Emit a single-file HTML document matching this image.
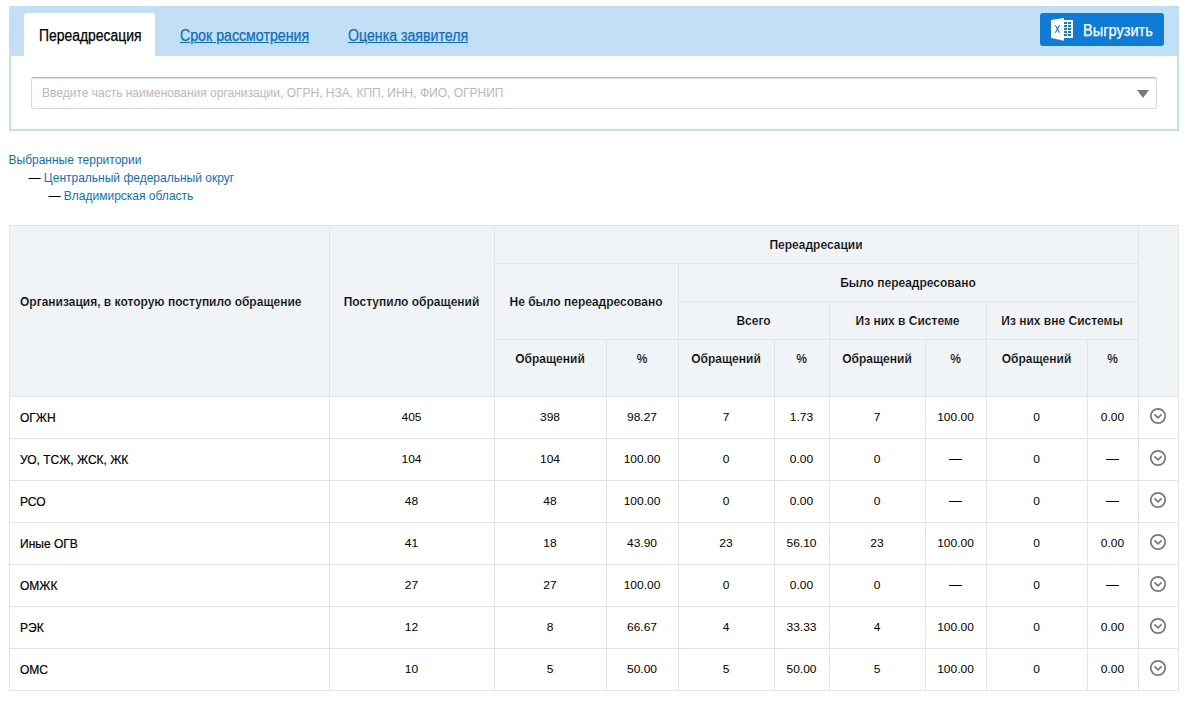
<!DOCTYPE html>
<html><head><meta charset="utf-8">
<style>
html,body{margin:0;padding:0;background:#fff;}
body{width:1188px;height:702px;overflow:hidden;position:relative;font-family:"Liberation Sans",sans-serif;}
div{box-sizing:border-box;}
.abs{position:absolute;}
.ln{position:absolute;background:#e0e5e9;}
.t{position:absolute;margin-top:-4px;text-align:center;font-size:12px;line-height:0;color:#000;white-space:nowrap;}
.t b{font-weight:bold;}
.num{font-size:11px;transform:scaleX(1.09);}
.h{position:absolute;margin-top:-4px;-webkit-text-stroke:0.2px #f0f4f7;text-align:center;font-size:12px;line-height:0;color:#000;font-weight:bold;white-space:nowrap;}
.tab{position:absolute;margin-top:-4px;-webkit-text-stroke:0.25px currentColor;font-size:16px;line-height:0;white-space:nowrap;transform-origin:0 0;}
.terr{position:absolute;margin-top:-4px;font-size:12px;line-height:0;white-space:nowrap;color:#0b6fc6;}
.dash{color:#000;}
</style></head><body>

<div class="abs" style="left:9px;top:6px;width:1170px;height:125px;border:2px solid #c2dff5;border-top:0;"></div>
<div class="abs" style="left:9px;top:6px;width:1170px;height:50px;background:#c2dff5;"></div>
<div class="abs" style="left:24px;top:13px;width:131px;height:43px;background:#fff;border-radius:3px 3px 0 0;"></div>
<div class="tab" style="left:39px;top:40px;color:#000;transform:scaleX(0.87)">Переадресация</div>
<div class="tab" style="left:180px;top:40px;color:#0c6dc4;text-decoration:underline;transform:scaleX(0.886)">Срок рассмотрения</div>
<div class="tab" style="left:347.5px;top:40px;color:#0c6dc4;text-decoration:underline;transform:scaleX(0.885)">Оценка заявителя</div>
<div class="abs" style="left:1040px;top:13px;width:124px;height:33px;background:#0e7bd6;border-radius:3px;"></div>
<svg class="abs" style="left:1050px;top:17px" width="25" height="25" viewBox="0 0 25 25">
<path d="M1 3 L14 1 L14 23.7 L1 21 Z" fill="#fff"/>
<rect x="14" y="3" width="9" height="18" fill="#fff"/>
<g fill="#0e7bd6">
<rect x="14" y="5" width="3" height="2"/><rect x="18" y="5" width="3" height="2"/>
<rect x="14" y="8" width="3" height="2"/><rect x="18" y="8" width="3" height="2"/>
<rect x="14" y="11" width="3" height="2"/><rect x="18" y="11" width="3" height="2"/>
<rect x="14" y="14" width="3" height="2"/><rect x="18" y="14" width="3" height="2"/>
<rect x="14" y="17" width="3" height="2"/><rect x="18" y="17" width="3" height="2"/>
</g>
<path d="M5.3 8.2 L9.6 15.8 M9.6 8.2 L5.3 15.8" stroke="#0e7bd6" stroke-width="1.1" fill="none"/>
</svg>
<div class="tab" style="left:1083px;top:35px;color:#fff;font-size:16px;transform:scaleX(0.91)">Выгрузить</div>
<div class="abs" style="left:31px;top:77px;width:1126px;height:32px;border:1px solid #d9d9d9;border-top-color:#b5b5b5;border-radius:3px;box-shadow:inset 0 1px 1px rgba(0,0,0,0.12);"></div>
<div class="abs" style="left:42px;top:93px;font-size:12px;line-height:0;color:#b9b9b9;white-space:nowrap">Введите часть наименования организации, ОГРН, НЗА, КПП, ИНН, ФИО, ОГРНИП</div>
<svg class="abs" style="left:1137px;top:90px" width="12" height="8" viewBox="0 0 12 8"><path d="M0 0 H12 L6 8 Z" fill="#777"/></svg>
<div class="terr" style="left:8.5px;top:164px">Выбранные территории</div>
<div class="terr" style="left:28.5px;top:182px"><span class="dash">—</span> Центральный федеральный округ</div>
<div class="terr" style="left:48.5px;top:200px"><span class="dash">—</span> Владимирская область</div>
<div class="abs" style="left:9px;top:225px;width:1170px;height:171px;background:#f0f4f7;"></div>
<div class="ln" style="left:9px;top:225px;width:1170px;height:1px"></div>
<div class="ln" style="left:9px;top:396px;width:1170px;height:1px"></div>
<div class="ln" style="left:9px;top:225px;width:1px;height:466px"></div>
<div class="ln" style="left:1178px;top:225px;width:1px;height:466px"></div>
<div class="ln" style="left:329px;top:225px;width:1px;height:466px"></div>
<div class="ln" style="left:494px;top:225px;width:1px;height:466px"></div>
<div class="ln" style="left:1138px;top:225px;width:1px;height:466px"></div>
<div class="ln" style="left:494px;top:263px;width:645px;height:1px"></div>
<div class="ln" style="left:678px;top:301px;width:461px;height:1px"></div>
<div class="ln" style="left:494px;top:339px;width:645px;height:1px"></div>
<div class="ln" style="left:678px;top:263px;width:1px;height:428px"></div>
<div class="ln" style="left:829px;top:301px;width:1px;height:390px"></div>
<div class="ln" style="left:986px;top:301px;width:1px;height:390px"></div>
<div class="ln" style="left:606px;top:339px;width:1px;height:352px"></div>
<div class="ln" style="left:774px;top:339px;width:1px;height:352px"></div>
<div class="ln" style="left:925px;top:339px;width:1px;height:352px"></div>
<div class="ln" style="left:1087px;top:339px;width:1px;height:352px"></div>
<div class="ln" style="left:9px;top:438px;width:1170px;height:1px"></div>
<div class="ln" style="left:9px;top:480px;width:1170px;height:1px"></div>
<div class="ln" style="left:9px;top:522px;width:1170px;height:1px"></div>
<div class="ln" style="left:9px;top:564px;width:1170px;height:1px"></div>
<div class="ln" style="left:9px;top:606px;width:1170px;height:1px"></div>
<div class="ln" style="left:9px;top:648px;width:1170px;height:1px"></div>
<div class="ln" style="left:9px;top:690px;width:1170px;height:1px"></div>
<div class="h" style="left:20px;top:306px;text-align:left">Организация, в которую поступило обращение</div>
<div class="h" style="left:329px;width:165px;top:306px">Поступило обращений</div>
<div class="h" style="left:494px;width:184px;top:306px">Не было переадресовано</div>
<div class="h" style="left:494px;width:644px;top:248.5px">Переадресации</div>
<div class="h" style="left:678px;width:460px;top:286.5px">Было переадресовано</div>
<div class="h" style="left:678px;width:151px;top:324.5px">Всего</div>
<div class="h" style="left:829px;width:157px;top:324.5px">Из них в Системе</div>
<div class="h" style="left:986px;width:152px;top:324.5px">Из них вне Системы</div>
<div class="h" style="left:494px;width:112px;top:363px">Обращений</div>
<div class="h" style="left:606px;width:72px;top:363px">%</div>
<div class="h" style="left:678px;width:96px;top:363px">Обращений</div>
<div class="h" style="left:774px;width:55px;top:363px">%</div>
<div class="h" style="left:829px;width:96px;top:363px">Обращений</div>
<div class="h" style="left:925px;width:61px;top:363px">%</div>
<div class="h" style="left:986px;width:101px;top:363px">Обращений</div>
<div class="h" style="left:1087px;width:51px;top:363px">%</div>
<div class="t" style="left:20px;top:422px;text-align:left;-webkit-text-stroke:0.2px #000">ОГЖН</div>
<div class="t num" style="left:329px;width:165px;top:421.4px">405</div>
<div class="t num" style="left:494px;width:112px;top:421.4px">398</div>
<div class="t num" style="left:606px;width:72px;top:421.4px">98.27</div>
<div class="t num" style="left:678px;width:96px;top:421.4px">7</div>
<div class="t num" style="left:774px;width:55px;top:421.4px">1.73</div>
<div class="t num" style="left:829px;width:96px;top:421.4px">7</div>
<div class="t num" style="left:925px;width:61px;top:421.4px">100.00</div>
<div class="t num" style="left:986px;width:101px;top:421.4px">0</div>
<div class="t num" style="left:1087px;width:51px;top:421.4px">0.00</div>
<svg class="abs" style="left:1149px;top:407px" width="18" height="18" viewBox="0 0 18 18"><circle cx="9" cy="9" r="7.2" fill="none" stroke="#777" stroke-width="1.7"/><path d="M5.4 7.3 L9 10.8 L12.6 7.3" fill="none" stroke="#777" stroke-width="1.7"/></svg>
<div class="t" style="left:20px;top:464px;text-align:left;-webkit-text-stroke:0.2px #000">УО, ТСЖ, ЖСК, ЖК</div>
<div class="t num" style="left:329px;width:165px;top:463.4px">104</div>
<div class="t num" style="left:494px;width:112px;top:463.4px">104</div>
<div class="t num" style="left:606px;width:72px;top:463.4px">100.00</div>
<div class="t num" style="left:678px;width:96px;top:463.4px">0</div>
<div class="t num" style="left:774px;width:55px;top:463.4px">0.00</div>
<div class="t num" style="left:829px;width:96px;top:463.4px">0</div>
<div class="abs" style="left:949px;top:459px;width:13px;height:1px;background:#000"></div>
<div class="t num" style="left:986px;width:101px;top:463.4px">0</div>
<div class="abs" style="left:1106px;top:459px;width:13px;height:1px;background:#000"></div>
<svg class="abs" style="left:1149px;top:449px" width="18" height="18" viewBox="0 0 18 18"><circle cx="9" cy="9" r="7.2" fill="none" stroke="#777" stroke-width="1.7"/><path d="M5.4 7.3 L9 10.8 L12.6 7.3" fill="none" stroke="#777" stroke-width="1.7"/></svg>
<div class="t" style="left:20px;top:506px;text-align:left;-webkit-text-stroke:0.2px #000">РСО</div>
<div class="t num" style="left:329px;width:165px;top:505.4px">48</div>
<div class="t num" style="left:494px;width:112px;top:505.4px">48</div>
<div class="t num" style="left:606px;width:72px;top:505.4px">100.00</div>
<div class="t num" style="left:678px;width:96px;top:505.4px">0</div>
<div class="t num" style="left:774px;width:55px;top:505.4px">0.00</div>
<div class="t num" style="left:829px;width:96px;top:505.4px">0</div>
<div class="abs" style="left:949px;top:501px;width:13px;height:1px;background:#000"></div>
<div class="t num" style="left:986px;width:101px;top:505.4px">0</div>
<div class="abs" style="left:1106px;top:501px;width:13px;height:1px;background:#000"></div>
<svg class="abs" style="left:1149px;top:491px" width="18" height="18" viewBox="0 0 18 18"><circle cx="9" cy="9" r="7.2" fill="none" stroke="#777" stroke-width="1.7"/><path d="M5.4 7.3 L9 10.8 L12.6 7.3" fill="none" stroke="#777" stroke-width="1.7"/></svg>
<div class="t" style="left:20px;top:548px;text-align:left;-webkit-text-stroke:0.2px #000">Иные ОГВ</div>
<div class="t num" style="left:329px;width:165px;top:547.4px">41</div>
<div class="t num" style="left:494px;width:112px;top:547.4px">18</div>
<div class="t num" style="left:606px;width:72px;top:547.4px">43.90</div>
<div class="t num" style="left:678px;width:96px;top:547.4px">23</div>
<div class="t num" style="left:774px;width:55px;top:547.4px">56.10</div>
<div class="t num" style="left:829px;width:96px;top:547.4px">23</div>
<div class="t num" style="left:925px;width:61px;top:547.4px">100.00</div>
<div class="t num" style="left:986px;width:101px;top:547.4px">0</div>
<div class="t num" style="left:1087px;width:51px;top:547.4px">0.00</div>
<svg class="abs" style="left:1149px;top:533px" width="18" height="18" viewBox="0 0 18 18"><circle cx="9" cy="9" r="7.2" fill="none" stroke="#777" stroke-width="1.7"/><path d="M5.4 7.3 L9 10.8 L12.6 7.3" fill="none" stroke="#777" stroke-width="1.7"/></svg>
<div class="t" style="left:20px;top:590px;text-align:left;-webkit-text-stroke:0.2px #000">ОМЖК</div>
<div class="t num" style="left:329px;width:165px;top:589.4px">27</div>
<div class="t num" style="left:494px;width:112px;top:589.4px">27</div>
<div class="t num" style="left:606px;width:72px;top:589.4px">100.00</div>
<div class="t num" style="left:678px;width:96px;top:589.4px">0</div>
<div class="t num" style="left:774px;width:55px;top:589.4px">0.00</div>
<div class="t num" style="left:829px;width:96px;top:589.4px">0</div>
<div class="abs" style="left:949px;top:585px;width:13px;height:1px;background:#000"></div>
<div class="t num" style="left:986px;width:101px;top:589.4px">0</div>
<div class="abs" style="left:1106px;top:585px;width:13px;height:1px;background:#000"></div>
<svg class="abs" style="left:1149px;top:575px" width="18" height="18" viewBox="0 0 18 18"><circle cx="9" cy="9" r="7.2" fill="none" stroke="#777" stroke-width="1.7"/><path d="M5.4 7.3 L9 10.8 L12.6 7.3" fill="none" stroke="#777" stroke-width="1.7"/></svg>
<div class="t" style="left:20px;top:632px;text-align:left;-webkit-text-stroke:0.2px #000">РЭК</div>
<div class="t num" style="left:329px;width:165px;top:631.4px">12</div>
<div class="t num" style="left:494px;width:112px;top:631.4px">8</div>
<div class="t num" style="left:606px;width:72px;top:631.4px">66.67</div>
<div class="t num" style="left:678px;width:96px;top:631.4px">4</div>
<div class="t num" style="left:774px;width:55px;top:631.4px">33.33</div>
<div class="t num" style="left:829px;width:96px;top:631.4px">4</div>
<div class="t num" style="left:925px;width:61px;top:631.4px">100.00</div>
<div class="t num" style="left:986px;width:101px;top:631.4px">0</div>
<div class="t num" style="left:1087px;width:51px;top:631.4px">0.00</div>
<svg class="abs" style="left:1149px;top:617px" width="18" height="18" viewBox="0 0 18 18"><circle cx="9" cy="9" r="7.2" fill="none" stroke="#777" stroke-width="1.7"/><path d="M5.4 7.3 L9 10.8 L12.6 7.3" fill="none" stroke="#777" stroke-width="1.7"/></svg>
<div class="t" style="left:20px;top:674px;text-align:left;-webkit-text-stroke:0.2px #000">ОМС</div>
<div class="t num" style="left:329px;width:165px;top:673.4px">10</div>
<div class="t num" style="left:494px;width:112px;top:673.4px">5</div>
<div class="t num" style="left:606px;width:72px;top:673.4px">50.00</div>
<div class="t num" style="left:678px;width:96px;top:673.4px">5</div>
<div class="t num" style="left:774px;width:55px;top:673.4px">50.00</div>
<div class="t num" style="left:829px;width:96px;top:673.4px">5</div>
<div class="t num" style="left:925px;width:61px;top:673.4px">100.00</div>
<div class="t num" style="left:986px;width:101px;top:673.4px">0</div>
<div class="t num" style="left:1087px;width:51px;top:673.4px">0.00</div>
<svg class="abs" style="left:1149px;top:659px" width="18" height="18" viewBox="0 0 18 18"><circle cx="9" cy="9" r="7.2" fill="none" stroke="#777" stroke-width="1.7"/><path d="M5.4 7.3 L9 10.8 L12.6 7.3" fill="none" stroke="#777" stroke-width="1.7"/></svg>
</body></html>
